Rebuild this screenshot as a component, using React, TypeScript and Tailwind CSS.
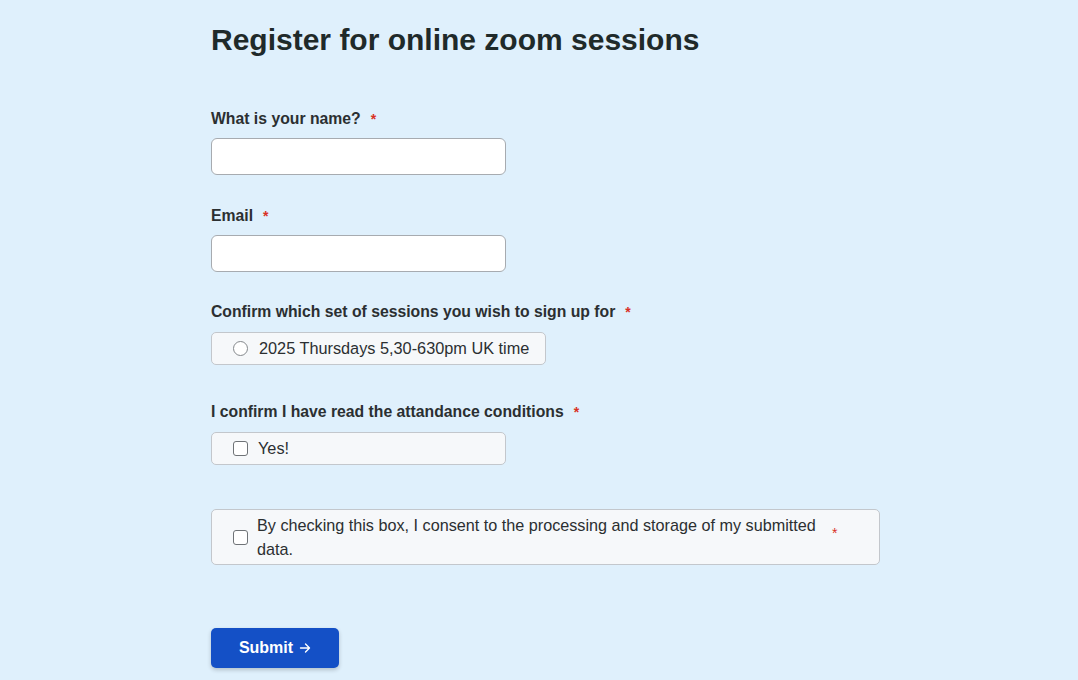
import React from "react";

function Star() {
  return <span className="text-[#d93025] ml-[10px] text-[14px] align-top">*</span>;
}

export default function App() {
  return (
    <div className="min-h-[680px] w-full bg-[#dff0fc] text-[#2b2f31] [font-family:'Liberation_Sans',Arial,sans-serif]">
      <div className="pl-[211px] pt-[20px]">
        <h1 className="text-[30px] leading-[40px] font-bold text-[#1f2a2a]">Register for online zoom sessions</h1>

        <div className="mt-[49px]">
          <label className="block text-[15.75px] font-bold leading-[20px]">What is your name?<Star /></label>
          <input className="mt-[9px] block w-[295px] h-[37px] rounded-[6px] border border-[#a7abb0] bg-white" />
        </div>

        <div className="mt-[31px]">
          <label className="block text-[15.75px] font-bold leading-[20px]">Email<Star /></label>
          <input className="mt-[9px] block w-[295px] h-[37px] rounded-[6px] border border-[#a7abb0] bg-white" />
        </div>

        <div className="mt-[30px]">
          <label className="block text-[15.75px] font-bold leading-[20px]">Confirm which set of sessions you wish to sign up for<Star /></label>
          <div className="mt-[10px] w-[335px] h-[33px] rounded-[5px] border border-[#c3c7cc] bg-[#f6f8fa] flex items-center pl-[21px]">
            <span className="w-[15px] h-[15px] rounded-full border-[1.5px] border-[#84888c] bg-white" />
            <span className="ml-[11px] text-[16.3px]">2025 Thursdays 5,30-630pm UK time</span>
          </div>
        </div>

        <div className="mt-[37px]">
          <label className="block text-[15.75px] font-bold leading-[20px]">I confirm I have read the attandance conditions<Star /></label>
          <div className="mt-[10px] w-[295px] h-[33px] rounded-[5px] border border-[#c3c7cc] bg-[#f6f8fa] flex items-center pl-[21px]">
            <span className="w-[15px] h-[15px] rounded-[3px] border-[1.5px] border-[#6f7377] bg-white" />
            <span className="ml-[10px] text-[16.3px]">Yes!</span>
          </div>
        </div>

        <div className="mt-[44px] w-[669px] h-[56px] rounded-[5px] border border-[#c3c7cc] bg-[#f6f8fa] flex items-center pl-[21px]">
          <span className="w-[15px] h-[15px] rounded-[3px] border-[1.5px] border-[#6f7377] bg-white shrink-0" />
          <span className="ml-[9px] text-[16.2px] leading-[24px] w-[568px]">By checking this box, I consent to the processing and storage of my submitted data.</span>
          <span className="text-[#d93025] text-[14px] ml-[7px] -mt-[8px]">*</span>
        </div>

        <button className="mt-[63px] w-[128px] h-[40px] rounded-[5px] bg-[#1450c6] text-white font-bold text-[16px] shadow-[0_2px_4px_rgba(0,0,0,0.2)] flex items-center justify-center gap-[6px]">
          Submit
          <svg width="12" height="12" viewBox="0 0 12 12" fill="none" stroke="white" strokeWidth="1.4" strokeLinecap="round" strokeLinejoin="round"><path d="M1.5 6h9M6.5 2l4 4-4 4" /></svg>
        </button>
      </div>
    </div>
  );
}
